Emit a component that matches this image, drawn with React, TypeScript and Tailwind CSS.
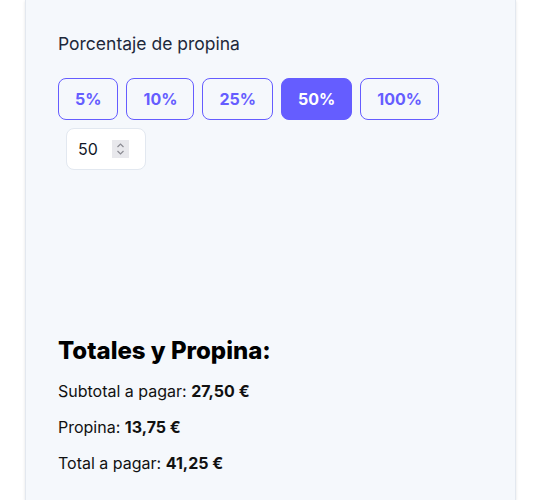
const tips = [5, 10, 25, 50, 100];

const App = () => {
  const active = 50;

  return (
    <div className="min-h-[500px] bg-white font-['Inter',sans-serif]">
      <div className="mx-[25px] min-h-[500px] w-[491px] border-x border-[#e3e8ef] bg-[#f5f8fc] px-[32px] pt-[32px] shadow-sm">
        <h3 className="text-[17.5px] leading-[24px] text-[#1e293b]">Porcentaje de propina</h3>

        <div className="mt-[22px] flex flex-wrap gap-2">
          {tips.map((t) => (
            <button
              key={t}
              className={
                t === active
                  ? "rounded-lg border border-[#655dff] bg-[#655dff] px-4 py-2 text-base leading-6 font-bold text-white"
                  : "rounded-lg border border-[#655dff] bg-transparent px-4 py-2 text-base leading-6 font-bold text-[#655dff]"
              }
            >
              {t}%
            </button>
          ))}
          <div className="ml-2 flex h-[42px] w-[80px] items-center justify-between rounded-lg border border-[#e2e8f0] bg-white pr-[16px] pl-[11px]">
            <span className="text-base text-[#111827]">{active}</span>
            <span className="flex h-[18px] w-[17px] flex-col items-center justify-center bg-[#e8e8ec]">
              <svg width="9" height="14" viewBox="0 0 9 14" fill="none" stroke="#8b8b93" strokeWidth="1.2">
                <path d="M1.5 5 L4.5 2 L7.5 5" />
                <path d="M1.5 9 L4.5 12 L7.5 9" />
              </svg>
            </span>
          </div>
        </div>

        <h2 className="mt-[165px] text-2xl font-extrabold text-black">Totales y Propina:</h2>
        <div className="mt-[12px] space-y-3 text-base leading-6 text-[#111]">
          <p>
            Subtotal a pagar: <span className="font-bold">27,50 €</span>
          </p>
          <p>
            Propina: <span className="font-bold">13,75 €</span>
          </p>
          <p>
            Total a pagar: <span className="font-bold">41,25 €</span>
          </p>
        </div>
      </div>
    </div>
  );
};

export default App;
